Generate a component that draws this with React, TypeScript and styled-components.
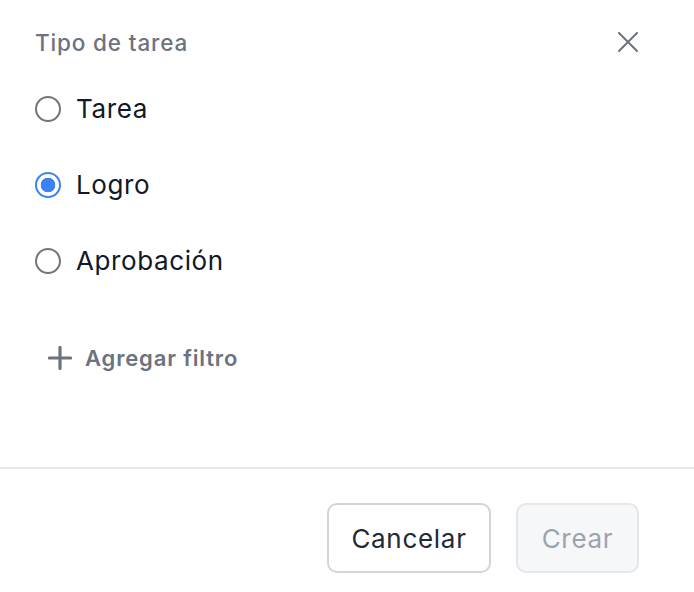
import React, { useState } from "react";
import styled, { createGlobalStyle } from "styled-components";

const GlobalStyle = createGlobalStyle`
  html, body {
    margin: 0;
    padding: 0;
    background: #ffffff;
  }
  body {
    font-family: Inter, "Noto Sans", "Liberation Sans", sans-serif;
    -webkit-font-smoothing: antialiased;
  }
`;

const options = ["Tarea", "Logro", "Aprobación"];

const App: React.FC = () => {
  const [selected, setSelected] = useState<string>("Logro");

  return (
    <>
      <GlobalStyle />
      <Dialog>
        <Body>
          <Header>
            <Title>Tipo de tarea</Title>
            <CloseBtn aria-label="Cerrar">
              <svg width="20" height="20" viewBox="0 0 20 20" fill="none">
                <path
                  d="M1 1L19 19M19 1L1 19"
                  stroke="#6b7280"
                  strokeWidth="2"
                  strokeLinecap="round"
                />
              </svg>
            </CloseBtn>
          </Header>
          <RadioList>
            {options.map((opt) => (
              <RadioRow key={opt}>
                <Radio
                  type="radio"
                  name="tipo"
                  checked={selected === opt}
                  onChange={() => setSelected(opt)}
                />
                <RadioLabel>{opt}</RadioLabel>
              </RadioRow>
            ))}
          </RadioList>
          <AddFilterBtn>
            <svg width="24" height="24" viewBox="0 0 24 24" fill="none">
              <path
                d="M12 1.5V22.5M1.5 12H22.5"
                stroke="#6b7280"
                strokeWidth="3.2"
                strokeLinecap="round"
              />
            </svg>
            Agregar filtro
          </AddFilterBtn>
        </Body>
        <Footer>
          <SecondaryBtn>Cancelar</SecondaryBtn>
          <PrimaryBtn disabled>Crear</PrimaryBtn>
        </Footer>
      </Dialog>
    </>
  );
};

export default App;

const Dialog = styled.div`
  height: 592px;
  display: flex;
  flex-direction: column;
  overflow: hidden;
`;

const Body = styled.div`
  flex: 1;
  padding: 24px 46px 0 35px;
  display: flex;
  flex-direction: column;
  border-bottom: 2px solid #e5e7eb;
`;

const Header = styled.div`
  height: 36px;
  display: flex;
  align-items: center;
  justify-content: space-between;
`;

const Title = styled.h2`
  margin: 0;
  font-size: 22.5px;
  letter-spacing: 0.85px;
  font-weight: 500;
  color: #6b7280;
`;

const CloseBtn = styled.button`
  width: 40px;
  height: 40px;
  border: none;
  background: none;
  padding: 0;
  display: flex;
  align-items: center;
  justify-content: center;
  cursor: pointer;
`;

const RadioList = styled.div`
  margin-top: 11px;
  display: flex;
  flex-direction: column;
`;

const RadioRow = styled.label`
  height: 76px;
  display: flex;
  align-items: center;
  gap: 15px;
  cursor: pointer;
`;

const Radio = styled.input`
  appearance: none;
  margin: 0;
  width: 26px;
  height: 26px;
  border-radius: 50%;
  border: 2px solid #757575;
  box-sizing: border-box;
  background: #ffffff;

  &:checked {
    border-color: #3b82f6;
    background: radial-gradient(circle, #3b82f6 0 7px, #ffffff 7.6px);
  }
`;

const RadioLabel = styled.span`
  font-size: 26px;
  letter-spacing: 0.6px;
  color: #111827;
  margin-top: -2px;
`;

const AddFilterBtn = styled.button`
  margin-top: 39px;
  align-self: flex-start;
  height: 40px;
  padding: 0 0 0 13px;
  border: none;
  background: none;
  display: flex;
  align-items: center;
  gap: 13px;
  font-family: inherit;
  font-size: 22px;
  letter-spacing: 0.85px;
  font-weight: 600;
  color: #6b7280;
  cursor: pointer;
`;

const Footer = styled.div`
  padding: 34px 55px 19px 0;
  display: flex;
  justify-content: flex-end;
  gap: 25px;
`;

const SecondaryBtn = styled.button`
  width: 164px;
  height: 70px;
  border: 2px solid #d1d5db;
  border-radius: 10px;
  background: #ffffff;
  font-family: inherit;
  font-size: 26px;
  letter-spacing: 0.7px;
  color: #1f2937;
  cursor: pointer;
`;

const PrimaryBtn = styled.button`
  width: 123px;
  height: 70px;
  border: 2px solid #e5e7eb;
  border-radius: 10px;
  background: #f6f7f9;
  font-family: inherit;
  font-size: 26px;
  letter-spacing: 0.7px;
  color: #9ca3af;
`;
